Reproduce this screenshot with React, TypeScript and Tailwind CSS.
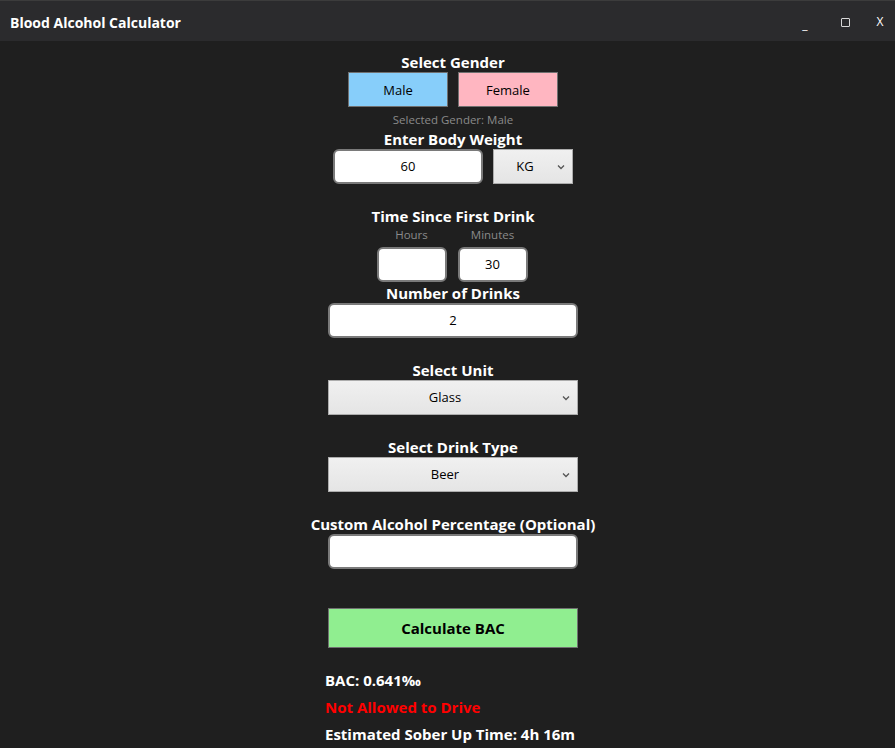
import React from "react";

const font = { fontFamily: '"Open Sans", "Noto Sans", sans-serif' };

function Chevron() {
  return (
    <svg width="8" height="6" viewBox="0 0 8 6" className="absolute right-[7px] top-1/2 -translate-y-1/2">
      <path d="M1 1.5 L4 4.5 L7 1.5" fill="none" stroke="#555" strokeWidth="1.3" />
    </svg>
  );
}

function Label({ children, className = "" }: { children: React.ReactNode; className?: string }) {
  return (
    <div className={`h-[20px] leading-[20px] text-[15px] font-bold text-white ${className}`}>{children}</div>
  );
}

function Input({ w, value }: { w: string; value?: string }) {
  return (
    <div className={`${w} h-[35px] rounded-[6px] border-2 border-[#7a7a7a] bg-white flex items-center justify-center pt-[1px] text-[13px] text-black`}>
      {value}
    </div>
  );
}

function Select({ w, value }: { w: string; value: string }) {
  return (
    <div className={`${w} relative h-[35px] border border-[#acacac] bg-gradient-to-b from-[#f0f0f0] to-[#e5e5e5] flex items-center justify-center pr-[16px] pt-[1px] text-[13px] text-black`}>
      {value}
      <Chevron />
    </div>
  );
}

export default function App() {
  return (
    <div className="w-[895px] h-[748px] bg-[#1f1f1f] overflow-hidden" style={font}>
      <div className="h-[41px] bg-[#2b2b2d] border-t border-[#3c3c3c] flex items-center justify-between">
        <div className="pl-[10px] pt-[2px] text-[14px] font-bold text-white">Blood Alcohol Calculator</div>
        <div className="flex items-center text-white text-[12px] pt-[2px]">
          <span className="w-[40px] text-center mt-[6px]">_</span>
          <span className="w-[40px] flex justify-center">
            <span className="w-[9px] h-[9px] border-[1.5px] border-[#d8d8d8] rounded-[1px]" />
          </span>
          <span className="w-[30px] text-center">X</span>
        </div>
      </div>
      <div className="flex flex-col items-center pl-[11px]">
        <Label className="mt-[11px]">Select Gender</Label>
        <div className="flex gap-[10px]">
          <div className="w-[100px] h-[35px] bg-[#87cefa] border border-[#707070] flex items-center justify-center pt-[2px] text-[13px] text-black">Male</div>
          <div className="w-[100px] h-[35px] bg-[#ffb6c1] border border-[#707070] flex items-center justify-center pt-[2px] text-[13px] text-black">Female</div>
        </div>
        <div className="mt-[5px] h-[16px] leading-[16px] text-[11.5px] text-[#8a8a8a]">Selected Gender: Male</div>
        <Label className="mt-[1px]">Enter Body Weight</Label>
        <div className="flex gap-[10px]">
          <Input w="w-[150px]" value="60" />
          <Select w="w-[80px]" value="KG" />
        </div>
        <Label className="mt-[22px]">Time Since First Drink</Label>
        <div className="flex gap-[11px] -ml-[2px]">
          <div className="w-[70px] flex flex-col items-center">
            <div className="h-[16px] leading-[16px] text-[11.5px] text-[#8a8a8a] mt-[1px]">Hours</div>
            <div className="mt-[4px]"><Input w="w-[70px]" /></div>
          </div>
          <div className="w-[70px] flex flex-col items-center">
            <div className="h-[16px] leading-[16px] text-[11.5px] text-[#8a8a8a] mt-[1px]">Minutes</div>
            <div className="mt-[4px]"><Input w="w-[70px]" value="30" /></div>
          </div>
        </div>
        <Label className="mt-[1px]">Number of Drinks</Label>
        <Input w="w-[250px]" value="2" />
        <Label className="mt-[22px]">Select Unit</Label>
        <Select w="w-[250px]" value="Glass" />
        <Label className="mt-[22px]">Select Drink Type</Label>
        <Select w="w-[250px]" value="Beer" />
        <Label className="mt-[22px]">Custom Alcohol Percentage (Optional)</Label>
        <Input w="w-[250px]" />
        <div className="mt-[39px] w-[250px] h-[40px] bg-[#90ee90] border border-[#707070] flex items-center justify-center text-[15px] font-bold text-black">
          Calculate BAC
        </div>
        <div className="w-[256px] mt-[22px] flex flex-col text-[15px] font-bold">
          <div className="h-[27px] leading-[20px] text-white">BAC: 0.641‰</div>
          <div className="h-[27px] leading-[20px] text-[#ff0000]">Not Allowed to Drive</div>
          <div className="h-[27px] leading-[20px] text-white whitespace-nowrap">Estimated Sober Up Time: 4h 16m</div>
        </div>
      </div>
    </div>
  );
}
